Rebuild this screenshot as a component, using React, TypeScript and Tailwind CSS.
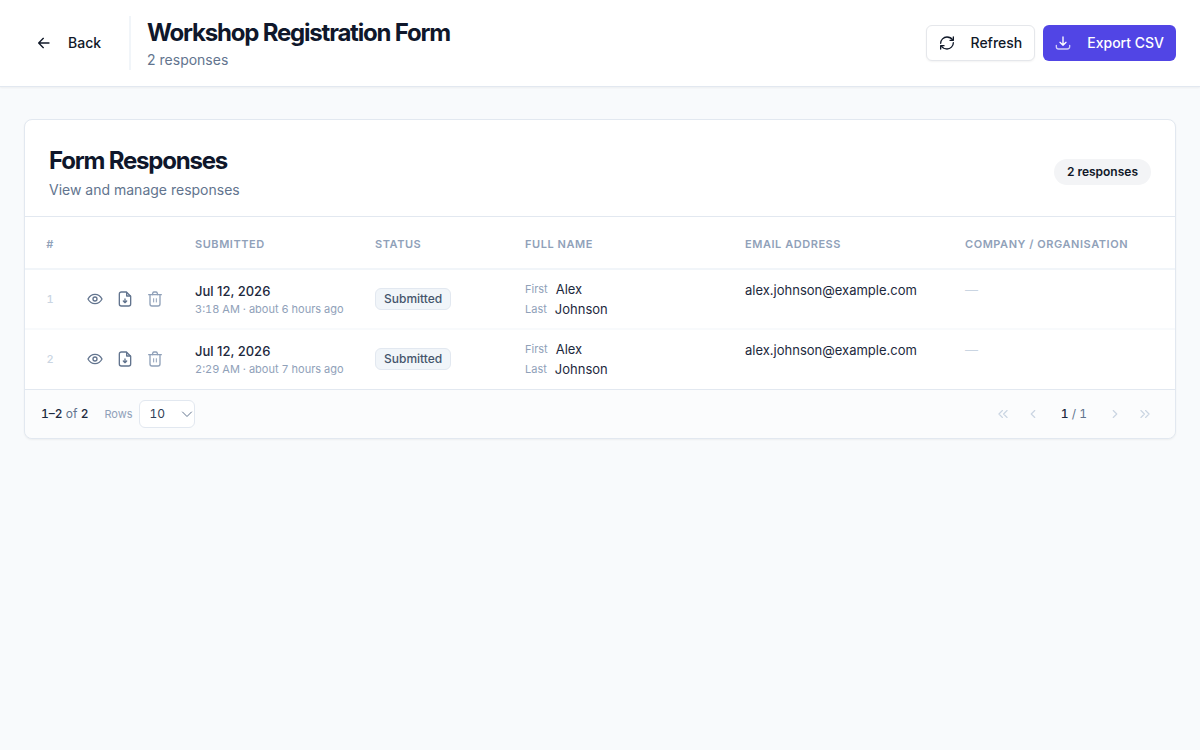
import type { ReactNode } from "react";

const responses = [
  { id: 1, date: "Jul 12, 2026", time: "3:18 AM", ago: "about 6 hours ago", first: "Alex", last: "Johnson", email: "alex.johnson@example.com" },
  { id: 2, date: "Jul 12, 2026", time: "2:29 AM", ago: "about 7 hours ago", first: "Alex", last: "Johnson", email: "alex.johnson@example.com" },
];

function Icon({ children, className = "size-4" }: { children: ReactNode; className?: string }) {
  return (
    <svg
      viewBox="0 0 24 24"
      fill="none"
      stroke="currentColor"
      strokeWidth={2}
      strokeLinecap="round"
      strokeLinejoin="round"
      className={`shrink-0 ${className}`}
      aria-hidden="true"
    >
      {children}
    </svg>
  );
}

const ArrowLeftIcon = () => (
  <Icon>
    <path d="M19.500 12H4.500M11 5l-7 7 7 7" />
  </Icon>
);

const RefreshIcon = () => (
  <Icon>
    <path d="M2.500 12.500A9.500 9.500 0 0 1 12 3c3.500 0 6.500 1.500 8.500 4.500" />
    <path d="M21.500 3v5h-5" />
    <path d="M21.500 11.500A9.500 9.500 0 0 1 12 21c-3.500 0-6.500-1.500-8.500-4.500" />
    <path d="M2.500 21v-5h5" />
  </Icon>
);

const DownloadIcon = () => (
  <Icon>
    <path d="M12 3v12.500M7.500 11l4.500 4.500 4.500-4.500" />
    <path d="M2 15.500v2A3.500 3.500 0 0 0 5.500 21h13a3.500 3.500 0 0 0 3.500-3.500v-2" opacity={0.75} />
  </Icon>
);

const EyeIcon = () => (
  <Icon>
    <path d="M1.500 12C4 7.300 7.700 5 12 5s8 2.300 10.500 7C20 16.700 16.300 19 12 19S4 16.700 1.500 12Z" />
    <circle cx="12" cy="12" r="3" />
  </Icon>
);

const FileDownIcon = () => (
  <Icon>
    <path d="M14 1.500H6.500A3 3 0 0 0 3.500 4.500v15a3 3 0 0 0 3 3h11a3 3 0 0 0 3-3V8L14 1.500Z" />
    <path d="M14.500 2v5.500H20" />
    <path d="M12 12v5M9.500 15l2.500 2.500 2.500-2.500" />
  </Icon>
);

const TrashIcon = () => (
  <Icon>
    <path d="M2.500 5.500h19" />
    <path d="M8 5.500l.7-2.600A2 2 0 0 1 10.600 1.500h2.800a2 2 0 0 1 1.900 1.400L16 5.500" />
    <path d="M4.500 5.500v14a3 3 0 0 0 3 3h9a3 3 0 0 0 3-3v-14" />
    <path d="M10 11.500v5M14 11.500v5" strokeWidth={1.500} />
  </Icon>
);

function RowAction({ label, className, children }: { label: string; className: string; children: ReactNode }) {
  return (
    <button type="button" aria-label={label} className={`flex size-7 items-center justify-center rounded-md hover:bg-slate-100 ${className}`}>
      {children}
    </button>
  );
}

function PageButton({ label, path }: { label: string; path: string }) {
  return (
    <button type="button" aria-label={label} disabled className="flex size-7 items-center justify-center rounded-md text-slate-300">
      <Icon className="size-3.5">
        <path d={path} />
      </Icon>
    </button>
  );
}

function Th({ children, className = "text-left" }: { children?: ReactNode; className?: string }) {
  return (
    <th
      scope="col"
      className={`px-5 pt-1 text-[11px] font-semibold tracking-wider whitespace-nowrap text-slate-400 uppercase ${className}`}
    >
      {children}
    </th>
  );
}

export default function App() {
  return (
    <div className="min-h-screen bg-slate-50 font-['Inter',sans-serif] text-slate-900">
      <header className="flex items-center justify-between border-b border-slate-200 bg-white px-6 py-4 shadow-xs">
        <div className="flex items-center gap-4">
          <button type="button" className="flex h-9 items-center gap-4 rounded-md px-3 text-sm font-medium text-gray-900">
            <ArrowLeftIcon />
            Back
          </button>
          <div className="border-l-2 border-slate-100 pl-4">
            <h1 className="text-2xl leading-[34px] font-bold tracking-tighter">Workshop Registration Form</h1>
            <p className="text-sm text-slate-500">2 responses</p>
          </div>
        </div>
        <div className="flex items-center gap-2">
          <button type="button" className="flex h-9 items-center gap-4 rounded-md border border-gray-200 bg-white px-3 text-sm font-medium text-gray-900 shadow-xs">
            <RefreshIcon />
            Refresh
          </button>
          <button type="button" className="flex h-9 items-center gap-4 rounded-md bg-[#5145e5] px-3 text-sm font-medium text-white">
            <DownloadIcon />
            Export CSV
          </button>
        </div>
      </header>

      <main className="px-6 py-8">
        <section className="overflow-hidden rounded-lg border border-slate-200 bg-white shadow-xs">
          <div className="flex items-center justify-between border-b border-slate-200 px-6 pt-6 pb-4">
            <div>
              <h2 className="text-2xl leading-[34px] font-bold tracking-tighter">Form Responses</h2>
              <p className="mt-0.5 text-sm text-slate-500">View and manage responses</p>
            </div>
            <span className="rounded-full border border-transparent bg-gray-100 px-3 py-1 text-xs font-semibold text-gray-900">
              2 responses
            </span>
          </div>

          <div className="overflow-x-auto">
            <table className="w-full min-w-[1100px] table-fixed border-separate border-spacing-0">
              <colgroup>
                <col className="w-[50px]" />
                <col className="w-[100px]" />
                <col className="w-[180px]" />
                <col className="w-[150px]" />
                <col className="w-[220px]" />
                <col className="w-[220px]" />
                <col />
              </colgroup>
              <thead>
                <tr className="h-[53px] *:border-b-2 *:border-slate-100">
                  <Th className="text-center">#</Th>
                  <td />
                  <Th>Submitted</Th>
                  <Th>Status</Th>
                  <Th>Full Name</Th>
                  <Th>Email Address</Th>
                  <Th>Company / Organisation</Th>
                </tr>
              </thead>
              <tbody>
                {responses.map((row) => (
                  <tr
                    key={row.id}
                    className="h-15 text-[13px] leading-5 text-slate-800 *:border-b-2 *:border-slate-50 last:h-[59px] last:*:border-transparent"
                  >
                    <td className="px-5 text-center text-[11px] font-medium text-slate-300 tabular-nums">{row.id}</td>
                    <td className="px-1.5">
                      <div className="flex gap-0.5">
                        <RowAction label="View response" className="text-slate-500">
                          <EyeIcon />
                        </RowAction>
                        <RowAction label="Download response" className="text-slate-500">
                          <FileDownIcon />
                        </RowAction>
                        <RowAction label="Delete response" className="text-slate-400">
                          <TrashIcon />
                        </RowAction>
                      </div>
                    </td>
                    <td className="px-5 whitespace-nowrap">
                      <div className="font-medium">{row.date}</div>
                      <div className="text-[11px] leading-4 text-slate-400 tabular-nums">
                        {row.time} · {row.ago}
                      </div>
                    </td>
                    <td className="px-5">
                      <span className="inline-block rounded-md border border-slate-200 bg-slate-100 px-2 text-xs leading-5 font-medium text-slate-600">
                        Submitted
                      </span>
                    </td>
                    <td className="px-5">
                      <div className="flex h-5 items-center gap-2">
                        <span className="text-[11px] text-slate-400">First</span>
                        {row.first}
                      </div>
                      <div className="flex h-5 items-center gap-2">
                        <span className="text-[11px] text-slate-400">Last</span>
                        {row.last}
                      </div>
                    </td>
                    <td className="px-5 pt-2.5 align-top">{row.email}</td>
                    <td className="px-5 pt-2.5 align-top text-slate-300">—</td>
                  </tr>
                ))}
              </tbody>
            </table>
          </div>

          <footer className="flex items-center justify-between border-t border-slate-200 bg-slate-50/60 px-4 py-2.5 text-xs text-slate-500 tabular-nums">
            <div className="flex items-center gap-4">
              <p>
                <span className="font-medium text-slate-800">1–2</span> of <span className="font-medium text-slate-800">2</span>
              </p>
              <div className="flex items-center gap-1.5">
                <label htmlFor="rows" className="text-[11px] text-slate-400">
                  Rows
                </label>
                <div className="relative">
                  <select
                    id="rows"
                    defaultValue="10"
                    className="h-7 w-14 appearance-none rounded-md border border-slate-200 bg-white pl-2.5 text-xs text-slate-700"
                  >
                    <option>10</option>
                    <option>25</option>
                    <option>50</option>
                  </select>
                  <Icon className="pointer-events-none absolute top-2 right-0.5 size-3 text-slate-500">
                    <path d="M3 8l9 9 9-9" />
                  </Icon>
                </div>
              </div>
            </div>
            <nav aria-label="Pagination" className="flex items-center gap-0.5">
              <PageButton label="First page" path="M11 6l-6 6 6 6M19 6l-6 6 6 6" />
              <PageButton label="Previous page" path="M15 6l-6 6 6 6" />
              <span className="px-3">
                <span className="font-medium text-slate-800">1</span> / 1
              </span>
              <PageButton label="Next page" path="M9 6l6 6-6 6" />
              <PageButton label="Last page" path="M5 6l6 6-6 6M13 6l6 6-6 6" />
            </nav>
          </footer>
        </section>
      </main>
    </div>
  );
}
